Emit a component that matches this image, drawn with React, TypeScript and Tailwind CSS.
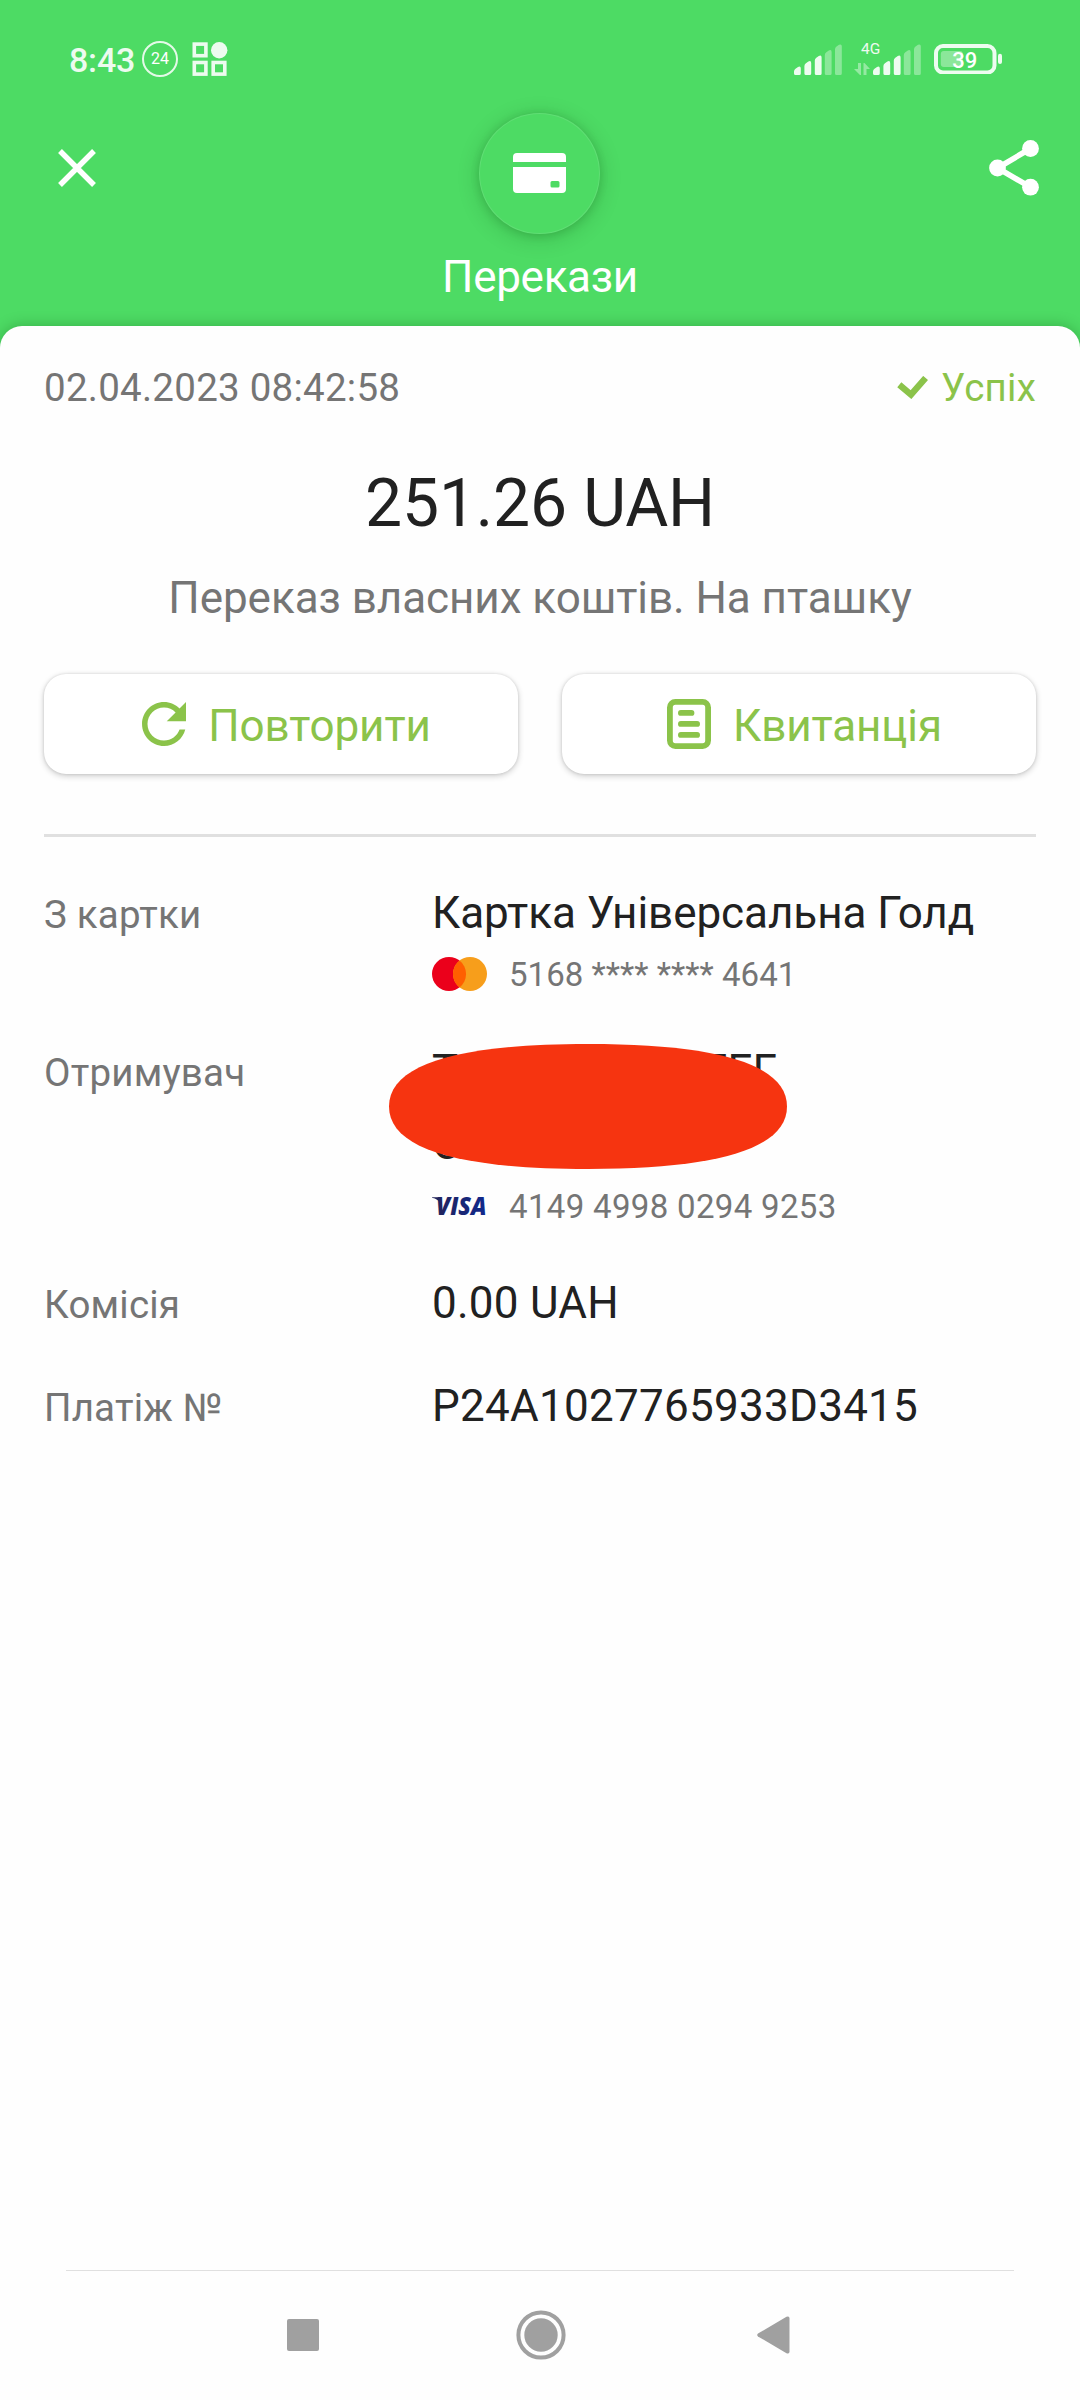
import type { ReactNode } from 'react';

const SIGNAL_BARS = [
  { x: 0, top: 22.5, dim: false },
  { x: 10.4, top: 17, dim: false },
  { x: 20.8, top: 11.5, dim: false },
  { x: 30.8, top: 6, dim: true },
  { x: 41, top: 0.3, dim: true },
];

function SignalBars() {
  return (
    <svg width="48" height="31" viewBox="0 0 48 31" fill="#fff">
      {SIGNAL_BARS.map((b) => (
        <path
          key={b.x}
          opacity={b.dim ? 0.35 : 0.9}
          d={`M${b.x} ${b.top + 5}Q${b.x} ${b.top + 3.2} ${b.x + 1.5} ${b.top + 2.2}L${b.x + 4} ${b.top + 0.5}Q${b.x + 6.8} ${b.top - 0.8} ${b.x + 6.8} ${b.top + 2}V29.5Q${b.x + 6.8} 31 ${b.x + 5.3} 31H${b.x + 1.5}Q${b.x} 31 ${b.x} 29.5Z`}
        />
      ))}
    </svg>
  );
}

function StatusBar() {
  return (
    <div className="flex h-[104px] items-start justify-between pl-[69px] pr-[77px] text-white">
      <div className="flex items-start pt-[39px]">
        <span className="mt-px w-[73px] text-[34px] font-medium leading-[40px] tracking-[-0.2px] opacity-90">8:43</span>
        <span className="mt-[2px] flex size-9 items-center justify-center rounded-full border-2 border-white/85 text-[16px] leading-none">
          24
        </span>
        <svg className="ml-[14px] mt-[3px]" width="36" height="35" viewBox="0 0 36 35" fill="none" stroke="#fff" strokeWidth="3.6" opacity="0.9">
          <rect x="2.3" y="2.1" width="11.6" height="11.6" />
          <rect x="2.3" y="20.5" width="11.6" height="11.6" />
          <rect x="21.2" y="20.5" width="11.6" height="11.6" />
          <circle cx="27.2" cy="8.2" r="8.2" fill="#fff" stroke="none" />
        </svg>
      </div>
      <div className="flex items-start pt-[44px]">
        <SignalBars />
        <div className="ml-[12px] mt-[-2px] flex w-[19px] flex-col">
          <span className="ml-[7px] text-[15.5px] leading-[15px] opacity-90">4G</span>
          <svg className="mt-[6px]" width="16" height="12" viewBox="0 0 16 12" fill="#fff" opacity="0.4">
            <path d="M4 0H7V12H6L0 6H4ZM9.500 0H10.500L16 6H12.500V12H9.500Z" />
          </svg>
        </div>
        <SignalBars />
        <svg className="ml-[13px]" width="69" height="30" viewBox="0 0 69 30" fill="none">
          <rect x="2" y="2" width="58.500" height="26.500" rx="7" stroke="#fff" strokeWidth="4" opacity="0.9" />
          <rect x="6.800" y="7" width="22" height="16" rx="3" fill="#fff" opacity="0.35" />
          <rect x="64" y="9.800" width="4" height="10.200" rx="2" fill="#fff" opacity="0.9" />
          <text x="18.200" y="23.500" fill="#fff" fontSize="22" fontWeight="500">39</text>
        </svg>
      </div>
    </div>
  );
}

function Header() {
  return (
    <header className="flex h-[222px] justify-between px-[41px] text-white">
      <svg className="ml-[17px] mt-[45px]" width="38" height="38" viewBox="0 0 38 38" stroke="#fff" strokeWidth="5.400">
        <path d="M2 2L36 36M36 2L2 36" />
      </svg>
      <div className="mr-[5px] flex flex-col items-center pt-[9px]">
        <div className="flex size-[121px] items-center justify-center rounded-full border border-white/10 bg-[#4ddb64] shadow-[0_4px_22px_rgba(0,60,0,0.2),0_1px_8px_rgba(0,60,0,0.16)]">
          <svg className="-mt-px" width="53" height="40" viewBox="0 0 53 40" fill="#fff">
            <path d="M4 0H49Q53 0 53 4V9H0V4Q0 0 4 0Z" />
            <path fillRule="evenodd" d="M0 14H53V36Q53 40 49 40H4Q0 40 0 36ZM39 28Q37.500 28 37.500 29.500V33Q37.500 34.500 39 34.500H45Q46.500 34.500 46.500 33V29.500Q46.500 28 45 28Z" />
          </svg>
        </div>
        <h1 className="mt-[17px] text-[44px] leading-[52px] tracking-[-0.3px]">Перекази</h1>
      </div>
      <svg className="mt-[36px]" width="50" height="56" viewBox="0 0 50 56" fill="#fff">
        <path d="M41.500 8.500L8.500 28L41.500 47.200" fill="none" stroke="#fff" strokeWidth="5.600" />
        <circle cx="41.500" cy="8.500" r="8.400" />
        <circle cx="8.500" cy="28" r="8.400" />
        <circle cx="41.500" cy="47.200" r="8.400" />
      </svg>
    </header>
  );
}

function ActionButton({ icon, label }: { icon: ReactNode; label: string }) {
  return (
    <button className="flex h-[100px] flex-1 items-center justify-center gap-[11px] rounded-[22px] bg-white text-[44px] tracking-[-0.1px] text-[#8bc34a] shadow-[0_2px_6px_rgba(0,0,0,0.2),0_0_3px_rgba(0,0,0,0.12)]">
      {icon}
      <span className="mt-[3px] leading-[52px]">{label}</span>
    </button>
  );
}

function RefreshIcon() {
  return (
    <svg width="66" height="66" viewBox="0 0 24 24" fill="currentColor">
      <path d="M17.650 6.350C16.200 4.900 14.210 4 12 4c-4.420 0-7.990 3.580-7.990 8s3.570 8 7.990 8c3.730 0 6.840-2.550 7.730-6h-2.080c-.82 2.330-3.040 4-5.650 4-3.310 0-6-2.690-6-6s2.690-6 6-6c1.660 0 3.140.69 4.220 1.780L13 11h7V4l-2.350 2.350z" />
    </svg>
  );
}

function ReceiptIcon() {
  return (
    <svg width="66" height="66" viewBox="0 0 66 66" fill="none" stroke="currentColor" strokeWidth="5.800">
      <rect x="13.900" y="10.900" width="38.200" height="44.200" rx="5.500" />
      <path d="M24.900 21.900H35.500M24.900 32.900H41.100M24.900 43.900H41.100" strokeLinecap="round" />
    </svg>
  );
}

function Mastercard() {
  return (
    <svg width="55" height="34" viewBox="0 0 55 34">
      <circle cx="17" cy="17" r="17" fill="#eb001b" />
      <circle cx="38" cy="17" r="17" fill="#f79e1b" />
      <path d="M27.500 3.600A17 17 0 0 1 27.500 30.400A17 17 0 0 1 27.500 3.600Z" fill="#ff5f00" />
    </svg>
  );
}

function Visa() {
  return (
    <svg className="overflow-visible" width="55" height="34" viewBox="0 0 55 34">
      <defs>
        <linearGradient id="visaBlue" x1="0" y1="0" x2="55" y2="0" gradientUnits="userSpaceOnUse">
          <stop offset="0" stopColor="#222357" />
          <stop offset="1" stopColor="#10298e" />
        </linearGradient>
      </defs>
      <path d="M0 8.300H6Q8 8.500 8.500 10.500L9.500 15Q6 10 0 8.800Z" fill="url(#visaBlue)" />
      <text
        x="4"
        y="25.500"
        fill="url(#visaBlue)"
        fontFamily="Open Sans"
        fontSize="24"
        fontWeight="800"
        fontStyle="italic"
        textLength="50.500"
        lengthAdjust="spacingAndGlyphs"
      >
        VISA
      </text>
    </svg>
  );
}

function Row({ label, className, children }: { label: string; className: string; children: ReactNode }) {
  return (
    <div className={`flex ${className}`}>
      <div className="w-[388px] shrink-0 pt-[2px] text-[38.5px] leading-[52px] tracking-[0.2px] text-[#757575]">{label}</div>
      <div className="flex-1 text-[44px] leading-[52px] text-[#212121]">{children}</div>
    </div>
  );
}

function CardNumber({ logo, children }: { logo: ReactNode; children: ReactNode }) {
  return (
    <div className="mt-[14px] flex h-[44px] items-center gap-[22px] text-[33px] leading-[44px] text-[#757575]">
      <span className="-mt-[2px]">{logo}</span>
      {children}
    </div>
  );
}

function RedactedName() {
  return (
    <div className="relative pb-px">
      <div className="flex w-[345px] justify-between whitespace-nowrap">
        <span>Т</span>
        <span>ЕЕГ</span>
      </div>
      <div className="mt-[21px]">О</div>
      <svg className="absolute -left-[43px] -top-px" width="398" height="125" viewBox="-199 -62.500 398 125">
        <path
          fill="#f63410"
          d="M-199 0C-199 -41.500 -132 -62.500 0 -62.500S199 -41.500 199 0S132 62.500 0 62.500S-199 41.500 -199 0Z"
        />
      </svg>
    </div>
  );
}

function NavBar() {
  return (
    <nav className="flex h-[129px] items-center justify-between px-[286px] pb-[2px]">
      <span className="ml-px size-8 rounded-[2px] bg-[#a0a0a0]" />
      <svg className="ml-[5px]" width="50" height="50" viewBox="0 0 50 50" fill="#a0a0a0">
        <circle cx="25" cy="25" r="22.600" fill="none" stroke="#a0a0a0" strokeWidth="4" />
        <circle cx="25" cy="25" r="16.700" />
      </svg>
      <svg className="mr-[4px]" width="33" height="38" viewBox="0 0 33 38" fill="#a0a0a0">
        <path d="M1 17.600L29.500 0.800Q32.500 -0.400 32.500 2.500V35.500Q32.500 38.400 29.500 37.200L1 20.400Q-0.600 19 1 17.600Z" />
      </svg>
    </nav>
  );
}

export default function App() {
  return (
    <div className="flex h-[2400px] w-[1080px] flex-col overflow-hidden bg-[#4ddb64] font-[Roboto,sans-serif]">
      <StatusBar />
      <Header />
      <main className="flex flex-1 flex-col rounded-t-[22px] bg-[#fefefe] shadow-[0_-1px_14px_rgba(0,60,0,0.25)]">
        <div className="flex flex-1 flex-col px-[44px]">
          <div className="flex h-[124px] items-center justify-between text-[38.5px] tracking-[0.25px] text-[#757575]">
            <span>02.04.2023 08:42:58</span>
            <span className="flex items-center gap-[13px] text-[#8bc34a]">
              <svg className="-mt-[2px]" width="31" height="23" viewBox="0 0 31 23" fill="none" stroke="currentColor" strokeWidth="6.400">
                <path d="M2.300 8.800L14 18.600L28.600 2" />
              </svg>
              Успіх
            </span>
          </div>
          <div className="text-center text-[66px] leading-[107px] tracking-[-0.15px] text-[#212121]">251.26 UAH</div>
          <div className="text-center text-[44px] leading-[82px] tracking-[-0.05px] text-[#757575]">
            Переказ власних коштів. На пташку
          </div>
          <div className="mt-[35px] flex gap-[44px]">
            <ActionButton icon={<RefreshIcon />} label="Повторити" />
            <ActionButton icon={<ReceiptIcon />} label="Квитанція" />
          </div>
          <div className="mt-[60px] h-[3px] bg-[#e0e0e0]" />
          <Row label="З картки" className="mt-[50px]">
            <span className="tracking-[-0.05px]">Картка Універсальна Голд</span>
            <CardNumber logo={<Mastercard />}>
              <span className="tracking-[0.04px]">5168 **** **** 4641</span>
            </CardNumber>
          </Row>
          <Row label="Отримувач" className="mt-[48px]">
            <RedactedName />
            <CardNumber logo={<Visa />}>
              <span className="tracking-[0.33px]">4149 4998 0294 9253</span>
            </CardNumber>
          </Row>
          <Row label="Комісія" className="mt-[48px]">
            <span className="tracking-[0.25px]">0.00 UAH</span>
          </Row>
          <Row label="Платіж №" className="mt-[49px]">
            <span className="tracking-[0.27px]">P24A1027765933D3415</span>
          </Row>
        </div>
        <div className="mx-[66px] h-px bg-[#e0e0e0]" />
        <NavBar />
      </main>
    </div>
  );
}
